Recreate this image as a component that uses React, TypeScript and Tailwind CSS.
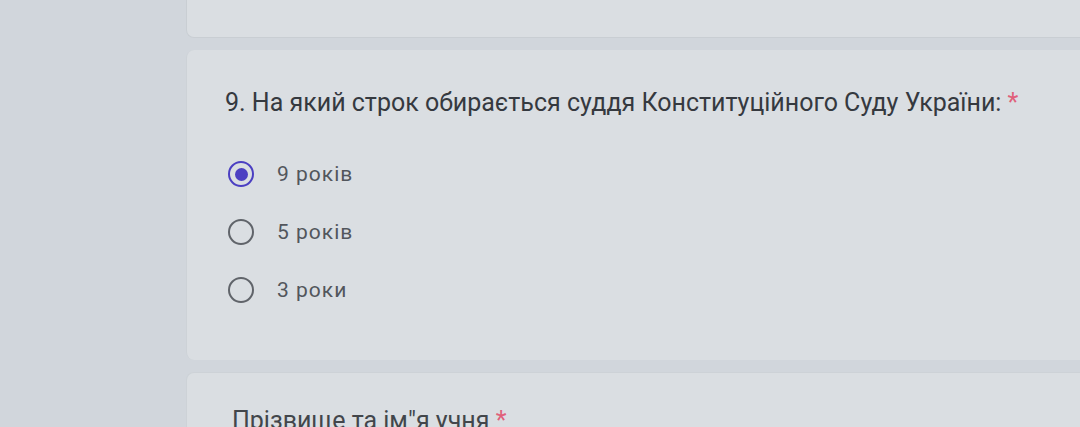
export default function App() {
  const options = ["9 років", "5 років", "3 роки"];
  const selected = 0;

  return (
    <div className="flex h-[427px] w-[1080px] overflow-hidden bg-[#d1d6dc] font-['Roboto',sans-serif]">
      <div className="w-[186px] shrink-0" />
      <div className="flex flex-1 flex-col gap-3">
        <div className="h-[38px] shrink-0 rounded-bl-lg border-b border-l border-[#c9ced3] bg-[#dadee2]" />

        <div className="flex h-[310px] shrink-0 flex-col rounded-l-lg border-l border-[#cdd2d7] bg-[#dadee2] pl-[38px] pt-[38px]">
          <h2 className="text-[25px] leading-[30px] text-[#35393f]">
            9. На який строк обирається суддя Конституційного Суду України:{" "}
            <span className="text-[#e0607a]">*</span>
          </h2>
          <div className="mt-[43px] flex flex-col gap-[32px]">
            {options.map((opt, i) => (
              <label key={opt} className="flex h-[26px] items-center gap-[23px] pl-[3px]">
                {i === selected ? (
                  <span className="flex h-[26px] w-[26px] items-center justify-center rounded-full border-[2.5px] border-[#4b3fc2]">
                    <span className="h-[13px] w-[13px] rounded-full bg-[#4b3fc2]" />
                  </span>
                ) : (
                  <span className="h-[26px] w-[26px] rounded-full border-[2.5px] border-[#60646a]" />
                )}
                <span className="text-[21px] leading-[26px] tracking-[1px] text-[#52565c]">{opt}</span>
              </label>
            ))}
          </div>
        </div>

        <div className="h-[80px] shrink-0 rounded-l-lg border-l border-t border-[#cdd2d7] bg-[#dadee2] pl-[45px] pt-[33px]">
          <p className="text-[25px] leading-[30px] text-[#42464b]">
            Прізвище та ім"я учня <span className="text-[#e0607a]">*</span>
          </p>
        </div>
      </div>
    </div>
  );
}
